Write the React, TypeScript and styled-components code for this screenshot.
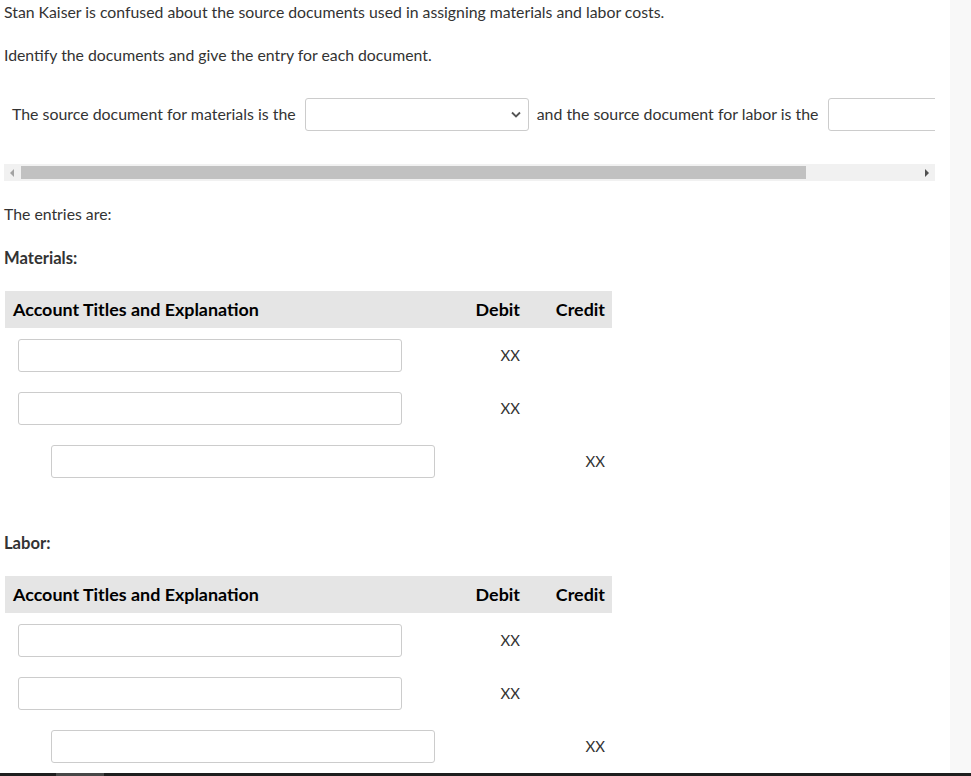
import React from "react";
import styled, { createGlobalStyle } from "styled-components";

const Global = createGlobalStyle`
  html, body { margin: 0; padding: 0; background: #fff; }
  body { font-family: Lato, "Open Sans", sans-serif; color: #333; }
  * { box-sizing: border-box; }
`;

const Page = styled.div`
  height: 776px;
  display: flex;
  flex-direction: column;
  overflow: hidden;
`;

const Body = styled.div`
  flex: 1;
  display: flex;
  min-height: 0;
`;

const Main = styled.div`
  width: 950px;
  padding: 1px 0 0 4px;
  overflow: hidden;
  display: flex;
  flex-direction: column;
`;

const SideStrip = styled.div`
  flex: 1;
  background: #f8f8f8;
`;

const BottomBar = styled.div`
  height: 3px;
  background: #1e1e1e;
  display: flex;
`;

const BottomThumb = styled.div`
  margin-left: 56px;
  width: 48px;
  background: #474747;
`;

const Para = styled.p<{ $mt?: number; $bold?: boolean }>`
  margin: ${(p) => p.$mt ?? 0}px 0 0 0;
  font-size: ${(p) => (p.$bold ? 16.6 : 15.8)}px;
  line-height: 22px;
  font-weight: ${(p) => (p.$bold ? 700 : 400)};
  color: #333;
  white-space: nowrap;
`;

const ScrollBox = styled.div`
  margin-top: 22px;
  width: 931px;
  display: flex;
  flex-direction: column;
`;

const ScrollViewport = styled.div`
  overflow: hidden;
  padding: 10px 0 33px 8px;
`;

const SentenceRow = styled.div`
  display: flex;
  align-items: center;
  white-space: nowrap;
  font-size: 15.9px;
  line-height: 20px;
  color: #333;
  width: 1100px;
`;

const Phrase = styled.span`
  position: relative;
  top: -1px;
`;

const Gap = styled.span`
  margin: 0 8px 0 9px;
  display: flex;
`;

const SelectWrap = styled.div`
  position: relative;
  width: 224px;
  height: 33px;
  flex: none;
`;

const Select = styled.select`
  appearance: none;
  width: 100%;
  height: 100%;
  border: 1px solid #cccccc;
  border-radius: 3px;
  background: #fff;
  font-family: inherit;
  font-size: 15px;
`;

const Chevron = styled.svg`
  position: absolute;
  right: 8px;
  top: 13px;
  pointer-events: none;
`;

const TextBox = styled.input<{ $w: number }>`
  width: ${(p) => p.$w}px;
  height: 33px;
  border: 1px solid #cccccc;
  border-radius: 3px;
  background: #fff;
  font-family: inherit;
  font-size: 15px;
  flex: none;
  outline: none;
`;

const ScrollBar = styled.div`
  height: 17px;
  background: #f1f1f1;
  display: flex;
  align-items: center;
`;

const ArrowBtn = styled.div`
  width: 17px;
  height: 17px;
  display: flex;
  align-items: center;
  justify-content: center;
  flex: none;
`;

const Thumb = styled.div`
  width: 785px;
  height: 13px;
  background: #c1c1c1;
  flex: none;
`;

const Track = styled.div`
  flex: 1;
`;

const Table = styled.div`
  margin-top: 22px;
  margin-left: 1px;
  width: 607px;
  display: grid;
  grid-template-columns: 1fr 85px 85px;
`;

const HeadCell = styled.div<{ $right?: boolean }>`
  background: #e5e5e5;
  height: 37px;
  display: flex;
  align-items: center;
  justify-content: ${(p) => (p.$right ? "flex-end" : "flex-start")};
  padding: ${(p) => (p.$right ? "0 7px 1px 0" : "0 0 1px 8px")};
  font-weight: 700;
  font-size: 17.9px;
  color: #000;
  white-space: nowrap;
`;

const AccountCell = styled.div<{ $indent?: boolean }>`
  height: 53px;
  padding: 11px 0 0 ${(p) => (p.$indent ? 46 : 13)}px;
`;

const AmountCell = styled.div`
  padding: 11px 7px 0 0;
  display: flex;
  align-items: center;
  justify-content: flex-end;
  font-size: 15px;
  color: #333;
  line-height: 33px;
  align-self: start;
  height: 44px;
`;

type Row = { indent: boolean; debit: string; credit: string };

const rows: Row[] = [
  { indent: false, debit: "XX", credit: "" },
  { indent: false, debit: "XX", credit: "" },
  { indent: true, debit: "", credit: "XX" },
];

function JournalTable() {
  return (
    <Table>
      <HeadCell>Account Titles and Explanation</HeadCell>
      <HeadCell $right>Debit</HeadCell>
      <HeadCell $right>Credit</HeadCell>
      {rows.map((r, i) => (
        <React.Fragment key={i}>
          <AccountCell $indent={r.indent}>
            <TextBox $w={384} />
          </AccountCell>
          <AmountCell>{r.debit}</AmountCell>
          <AmountCell>{r.credit}</AmountCell>
        </React.Fragment>
      ))}
    </Table>
  );
}

export default function App() {
  return (
    <Page>
      <Global />
      <Body>
        <Main>
          <Para>
            Stan Kaiser is confused about the source documents used in assigning materials and labor costs.
          </Para>
          <Para $mt={21}>Identify the documents and give the entry for each document.</Para>
          <ScrollBox>
            <ScrollViewport>
              <SentenceRow>
                <Phrase>The source document for materials is the</Phrase>
                <Gap>
                  <SelectWrap>
                    <Select defaultValue="">
                      <option value=""></option>
                    </Select>
                    <Chevron width="10" height="7" viewBox="0 0 10 7">
                      <path d="M1 1.5 L5 5.5 L9 1.5" fill="none" stroke="#555" strokeWidth="1.8" />
                    </Chevron>
                  </SelectWrap>
                </Gap>
                <Phrase>and the source document for labor is the</Phrase>
                <Gap>
                  <TextBox $w={224} />
                </Gap>
              </SentenceRow>
            </ScrollViewport>
            <ScrollBar>
              <ArrowBtn>
                <svg width="5" height="8" viewBox="0 0 5 8">
                  <path d="M4 0 L0 4 L4 8 Z" fill="#a3a3a3" />
                </svg>
              </ArrowBtn>
              <Thumb />
              <Track />
              <ArrowBtn>
                <svg width="5" height="8" viewBox="0 0 5 8">
                  <path d="M1 0 L5 4 L1 8 Z" fill="#505050" />
                </svg>
              </ArrowBtn>
            </ScrollBar>
          </ScrollBox>
          <Para $mt={22}>The entries are:</Para>
          <Para $mt={22} $bold>Materials:</Para>
          <JournalTable />
          <Para $mt={45} $bold>Labor:</Para>
          <JournalTable />
        </Main>
        <SideStrip />
      </Body>
      <BottomBar>
        <BottomThumb />
      </BottomBar>
    </Page>
  );
}
